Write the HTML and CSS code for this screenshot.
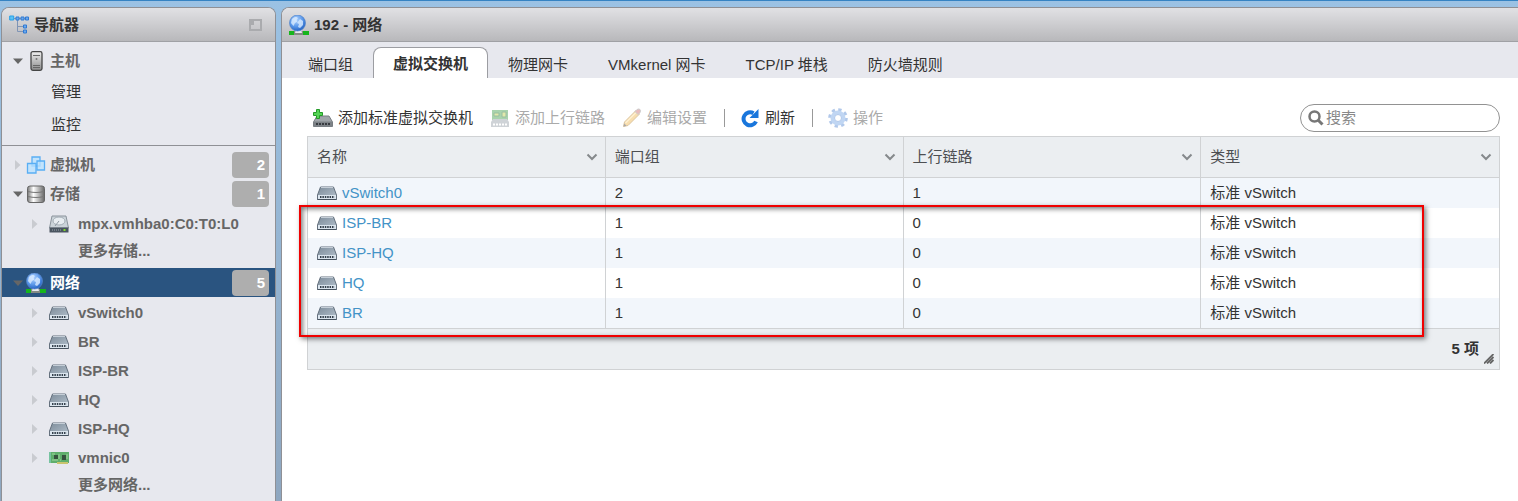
FILE: index.html
```html
<!DOCTYPE html>
<html lang="zh-CN">
  <head>
    <meta charset="utf-8">
    <meta name="viewport" content="width=device-width,initial-scale=1">
    <title>192 - 网络</title>
    <link rel="stylesheet" href="styles.css">
  </head>
  <body>
    <!-- Shared icons -->
    <svg class="sprite" aria-hidden="true">
        <defs>
            <linearGradient id="steel" x1="0" y1="0" x2="1" y2="1">
                <stop offset="0" stop-color="#7e8d9b"/>
                <stop offset="1" stop-color="#b4c1cd"/>
            </linearGradient>
            <linearGradient id="metal" x1="0" y1="0" x2="1" y2="0">
                <stop offset="0" stop-color="#777"/>
                <stop offset="0.35" stop-color="#fff"/>
                <stop offset="1" stop-color="#666"/>
            </linearGradient>
            <linearGradient id="tower" x1="0" y1="0" x2="0" y2="1">
                <stop offset="0" stop-color="#f0f0f0"/>
                <stop offset="1" stop-color="#8b8b8b"/>
            </linearGradient>
            <radialGradient id="ball" cx="0.4" cy="0.3" r="0.7">
                <stop offset="0" stop-color="#b5d7ff"/>
                <stop offset="0.6" stop-color="#5b98ea"/>
                <stop offset="1" stop-color="#2765c4"/>
            </radialGradient>
        </defs>
        <symbol id="icon-open" viewBox="0 0 12 12"><path d="M1 3.500h10L6 9z" fill="#666"/></symbol>
        <symbol id="icon-closed" viewBox="0 0 12 12"><path d="M3 1v10L8.500 6z" fill="#c9cbd0"/></symbol>
        <symbol id="icon-switch" viewBox="0 0 20 20">
            <path d="M3.500 4h13l3 8v4.500H.5V12z" fill="url(#steel)" stroke="#65717e"/>
            <path d="M4 4.500h12" stroke="#c5ced7"/>
            <path d="M1 12h18v4H1z" fill="#dbe5ee"/>
            <path d="M3 14h14.500" stroke="#34404c" stroke-width="2" stroke-dasharray="1.500 .9"/>
            <path d="M.5 16.500h19" stroke="#46525e"/>
        </symbol>
        <symbol id="icon-globe" viewBox="0 0 20 20">
            <path d="M0 16h20v4H0z" fill="#16b51c"/>
            <path d="M5 16h9v4H5z" fill="#858b85"/>
            <path d="M7 14h5l1 4H6z" fill="#e7eaf0"/>
            <circle cx="8.500" cy="8" r="8" fill="url(#ball)" stroke="#5786c9" stroke-width=".7"/>
            <path d="M3 4c3-3 5-2 6-1L7.500 5l1 1.500L6 8 4.500 11 2 8zM11 4l3 2v4l-3 3-2-1 1-3-2-1z" fill="#d9ebff" opacity=".8"/>
        </symbol>
        <symbol id="icon-nav" viewBox="0 0 20 20">
            <path d="M5 3.500h13M8.500 4v12.500H15M8.500 11.500H15" fill="none" stroke="#8095b5"/>
            <path d="M.7 1h4v4h-4z" fill="#5cc2f5" stroke="#27a0e8"/>
            <path d="M7 2h3v3H7zM12 2h3v3h-3zM16.500 2h3v3h-3zM14.500 10h3v3h-3zM14.500 15h3v3h-3z" fill="#6ca9ee" stroke="#317ad2"/>
        </symbol>
        <symbol id="icon-host" viewBox="0 0 20 20">
            <rect x="5" y=".7" width="11" height="18.600" rx="1.800" fill="url(#tower)" stroke="#454545" stroke-width="1.300"/>
            <path d="M7 4.500h7M7 14.500h7M7 16.500h7" stroke="#666"/>
            <circle cx="10.500" cy="8" r="1" fill="#777"/>
        </symbol>
        <symbol id="icon-vm" viewBox="0 0 20 20">
            <g fill="#b9e1ff" fill-opacity=".8" stroke="#59aef4" stroke-width="1.300">
                <path d="M6 2h8v9H6z"/>
                <path d="M11 6h7.500v9H11z"/>
                <path d="M1.500 8.500H10V18H1.500z"/>
            </g>
        </symbol>
        <symbol id="icon-store" viewBox="0 0 20 20">
            <rect x="1.500" y="2" width="17" height="16.500" rx="2.500" fill="url(#metal)" stroke="#666"/>
            <path d="M2 7.500q8 2 16 0M2 12.500q8 2 16 0" fill="none" stroke="#777" stroke-width="1.200"/>
        </symbol>
        <symbol id="icon-disk" viewBox="0 0 20 20">
            <path d="M3 2h14l2.500 12H.5z" fill="#cbd3d9" stroke="#8b949c"/>
            <ellipse cx="10" cy="7" rx="6" ry="4" fill="#e8edf1" stroke="#a2acb4"/>
            <path d="M10 7l-4 5" stroke="#8d98a2"/>
            <path d="M.5 13.500h19v5H.5z" fill="#4a5560"/>
            <path d="M3 16h9" stroke="#9ba5ad" stroke-dasharray="1 1"/>
            <path d="M14.500 15h2v2h-2z" fill="#7edb2a"/>
        </symbol>
        <symbol id="icon-nic" viewBox="0 0 20 20">
            <path d="M0 4h20v11H0z" fill="#5fae6c"/>
            <path d="M0 4h2v11H0z" fill="#76c3a0"/>
            <path d="M8 14h11v2H8z" fill="#c9c46e"/>
            <path d="M5 7h4v4H5zM13 7h4v5h-4z" fill="#36523e"/>
            <path d="M3 6h3M10 6v5M3 12h6M11 12h1M18 6v5" stroke="#a0d59b"/>
        </symbol>
        <symbol id="icon-add" viewBox="0 0 20 20">
            <path d="M4 8h12l3.500 6v4.500H.5V14z" fill="#a0a5aa" stroke="#777c81"/>
            <path d="M1 13.500h18v5H1z" fill="#7d8287"/>
            <path d="M3 16h15" stroke="#373b40" stroke-width="2" stroke-dasharray="2 1"/>
            <path d="M3.500 1.500h3v3h3v3h-3v3h-3v-3h-3v-3h3z" fill="#55d455" stroke="#249b29"/>
        </symbol>
        <symbol id="icon-uplink" viewBox="0 0 20 20">
            <path d="M2 2h16v10H2z" fill="#56a95e"/>
            <path d="M4 5h5v3H4zM12 4h4v5h-4z" fill="#c6d55b" stroke="#377f45"/>
            <path d="M3 11h14l2 3v5H1v-5z" fill="#a1a9b1"/>
            <path d="M3 16.500h15" stroke="#fff" stroke-width="2" stroke-dasharray="2 1"/>
        </symbol>
        <symbol id="icon-pencil" viewBox="0 0 20 20">
            <path d="M1.500 18.500l1-4.500L14 2.500 17.500 6 6 17.500z" fill="#f2bd5d" stroke="#b98b42"/>
            <path d="M3.500 15L15 3.500" stroke="#ffe4a5" stroke-width="1.500"/>
            <path d="M13 3.500l2-2q2-1 3 0t0 3l-2 2z" fill="#d57878" stroke="#999"/>
            <path d="M1.500 18.500l.8-3 2.200 2.200z" fill="#555"/>
        </symbol>
        <symbol id="icon-refresh" viewBox="0 0 20 20">
            <path d="M16 13.500A6.500 6.500 0 1 1 13.500 5.300" fill="none" stroke="#1976dc" stroke-width="4"/>
            <path d="M18.500 1v9H9.500z" fill="#1976dc"/>
        </symbol>
        <symbol id="icon-gear" viewBox="0 0 20 20">
            <circle cx="10" cy="10" r="8.300" fill="none" stroke="#6593d7" stroke-width="3" stroke-dasharray="3.260 3.260"/>
            <circle cx="10" cy="10" r="5.500" fill="none" stroke="#82aee8" stroke-width="4"/>
            <circle cx="10" cy="10" r="3.500" fill="none" stroke="#6593d7"/>
        </symbol>
        <symbol id="icon-search" viewBox="0 0 20 20">
            <circle cx="8.500" cy="8.500" r="5" fill="none" stroke="#777" stroke-width="2.500"/>
            <path d="M12 12l4.500 4.500" stroke="#777" stroke-width="3"/>
        </symbol>
        <symbol id="icon-down" viewBox="0 0 12 12"><path d="M1.500 3.500L6 8l4.500-4.500" fill="none" stroke="#85898c" stroke-width="2"/></symbol>
        <symbol id="icon-pin" viewBox="0 0 14 12">
            <path d="M1 1h11v10H1z" fill="none" stroke="#aaabae" stroke-width="2"/>
            <path d="M2 2h3v4H2z" fill="#aaabae"/>
        </symbol>
        <symbol id="icon-grip" viewBox="0 0 10 10"><path d="M0 9.500L9.500 0M3 9.500L9.500 3M6 9.500L9.500 6" stroke="#666" stroke-width="1.800"/></symbol>
    </svg>

    <div class="layout">
        <aside class="panel navigator">
            <header class="panel-header">
                <svg class="icon"><use href="#icon-nav"/></svg>
                <h2>导航器</h2>
                <button class="pin" aria-label="折叠"><svg><use href="#icon-pin"/></svg></button>
            </header>
            <nav>
                <ul class="tree host">
                    <li>
                        <a class="node" href="#"><svg class="arrow"><use href="#icon-open"/></svg><svg class="icon"><use href="#icon-host"/></svg><span>主机</span></a>
                        <ul>
                            <li><a class="leaf" href="#">管理</a></li>
                            <li><a class="leaf" href="#">监控</a></li>
                        </ul>
                    </li>
                </ul>
                <ul class="tree inventory">
                    <li>
                        <a class="node" href="#"><svg class="arrow"><use href="#icon-closed"/></svg><svg class="icon"><use href="#icon-vm"/></svg><span>虚拟机</span><span class="badge">2</span></a>
                    </li>
                    <li>
                        <a class="node" href="#"><svg class="arrow"><use href="#icon-open"/></svg><svg class="icon"><use href="#icon-store"/></svg><span>存储</span><span class="badge">1</span></a>
                        <ul class="children">
                            <li><a class="node" href="#"><svg class="arrow"><use href="#icon-closed"/></svg><svg class="icon"><use href="#icon-disk"/></svg><span>mpx.vmhba0:C0:T0:L0</span></a></li>
                            <li><a class="more" href="#">更多存储...</a></li>
                        </ul>
                    </li>
                    <li>
                        <a class="node selected" href="#"><svg class="arrow"><use href="#icon-open"/></svg><svg class="icon"><use href="#icon-globe"/></svg><span>网络</span><span class="badge">5</span></a>
                        <ul class="children">
                            <li><a class="node" href="#"><svg class="arrow"><use href="#icon-closed"/></svg><svg class="icon"><use href="#icon-switch"/></svg><span>vSwitch0</span></a></li>
                            <li><a class="node" href="#"><svg class="arrow"><use href="#icon-closed"/></svg><svg class="icon"><use href="#icon-switch"/></svg><span>BR</span></a></li>
                            <li><a class="node" href="#"><svg class="arrow"><use href="#icon-closed"/></svg><svg class="icon"><use href="#icon-switch"/></svg><span>ISP-BR</span></a></li>
                            <li><a class="node" href="#"><svg class="arrow"><use href="#icon-closed"/></svg><svg class="icon"><use href="#icon-switch"/></svg><span>HQ</span></a></li>
                            <li><a class="node" href="#"><svg class="arrow"><use href="#icon-closed"/></svg><svg class="icon"><use href="#icon-switch"/></svg><span>ISP-HQ</span></a></li>
                            <li><a class="node" href="#"><svg class="arrow"><use href="#icon-closed"/></svg><svg class="icon"><use href="#icon-nic"/></svg><span>vmnic0</span></a></li>
                            <li><a class="more" href="#">更多网络...</a></li>
                        </ul>
                    </li>
                </ul>
            </nav>
        </aside>

        <main class="panel content">
            <header class="panel-header">
                <svg class="icon"><use href="#icon-globe"/></svg>
                <h1>192 - 网络</h1>
            </header>
            <div class="tabs" role="tablist">
                <button class="tab" role="tab">端口组</button>
                <button class="tab active" role="tab" aria-selected="true">虚拟交换机</button>
                <button class="tab" role="tab">物理网卡</button>
                <button class="tab" role="tab">VMkernel 网卡</button>
                <button class="tab" role="tab">TCP/IP 堆栈</button>
                <button class="tab" role="tab">防火墙规则</button>
            </div>
            <div class="view">
                <div class="toolbar">
                    <button class="action"><svg class="icon"><use href="#icon-add"/></svg>添加标准虚拟交换机</button>
                    <button class="action" disabled><svg class="icon"><use href="#icon-uplink"/></svg>添加上行链路</button>
                    <button class="action" disabled><svg class="icon"><use href="#icon-pencil"/></svg>编辑设置</button>
                    <span class="separator"></span>
                    <button class="action"><svg class="icon"><use href="#icon-refresh"/></svg>刷新</button>
                    <span class="separator"></span>
                    <button class="action" disabled><svg class="icon"><use href="#icon-gear"/></svg>操作</button>
                    <label class="search">
                        <svg class="icon"><use href="#icon-search"/></svg>
                        <input type="search" placeholder="搜索" aria-label="搜索">
                    </label>
                </div>
                <div class="grid">
                    <table>
                        <thead>
                            <tr>
                                <th><div class="head">名称<svg class="arrow"><use href="#icon-down"/></svg></div></th>
                                <th><div class="head">端口组<svg class="arrow"><use href="#icon-down"/></svg></div></th>
                                <th><div class="head">上行链路<svg class="arrow"><use href="#icon-down"/></svg></div></th>
                                <th><div class="head">类型<svg class="arrow"><use href="#icon-down"/></svg></div></th>
                            </tr>
                        </thead>
                        <tbody>
                            <tr><td><a class="name" href="#"><svg class="icon"><use href="#icon-switch"/></svg>vSwitch0</a></td><td>2</td><td>1</td><td>标准 vSwitch</td></tr>
                            <tr><td><a class="name" href="#"><svg class="icon"><use href="#icon-switch"/></svg>ISP-BR</a></td><td>1</td><td>0</td><td>标准 vSwitch</td></tr>
                            <tr><td><a class="name" href="#"><svg class="icon"><use href="#icon-switch"/></svg>ISP-HQ</a></td><td>1</td><td>0</td><td>标准 vSwitch</td></tr>
                            <tr><td><a class="name" href="#"><svg class="icon"><use href="#icon-switch"/></svg>HQ</a></td><td>1</td><td>0</td><td>标准 vSwitch</td></tr>
                            <tr><td><a class="name" href="#"><svg class="icon"><use href="#icon-switch"/></svg>BR</a></td><td>1</td><td>0</td><td>标准 vSwitch</td></tr>
                        </tbody>
                    </table>
                    <div class="grid-footer">
                        <span>5 项</span>
                        <svg class="grip"><use href="#icon-grip"/></svg>
                    </div>
                    <div class="highlight"></div>
                </div>
            </div>
        </main>
    </div>
  </body>
</html>
```
FILE: styles.css
```css
:root {
    --panel: #e7e8ee;
    --border: #8f9095;
    --line: #d0d2d4;
    --text: #333;
    --muted: #666;
    --link: #4393c7;
    --selected: #2a5480;
}

* {
    box-sizing: border-box;
}

body {
    margin: 0;
    min-height: 100vh;
    border-top: 1px solid #3583c3;
    background: linear-gradient(#9bc2e4, #8fa7c0);
    color: var(--text);
    font: 15px/20px "Liberation Sans", "Noto Sans CJK SC", sans-serif;
    overflow: hidden;
}

ul {
    margin: 0;
    padding: 0;
    list-style: none;
}

a {
    color: inherit;
    text-decoration: none;
}

button {
    padding: 0;
    border: 0;
    background: none;
    color: inherit;
    font: inherit;
}

.sprite {
    position: absolute;
    width: 0;
    height: 0;
}

.icon {
    flex: none;
    width: 20px;
    height: 20px;
}

.arrow {
    flex: none;
    width: 12px;
    height: 12px;
}

.layout {
    display: flex;
    gap: 5px;
    min-height: 100vh;
    padding: 6px 0 0 1px;
}

/* Panels */
.panel {
    border: 1px solid var(--border);
    border-bottom: 0;
    border-radius: 8px 8px 0 0;
    background: var(--panel);
}

.panel-header {
    display: flex;
    align-items: center;
    gap: 5px;
    height: 34px;
    padding: 0 12px 0 7px;
    border-bottom: 1px solid #a0a1a5;
    border-radius: 7px 7px 0 0;
    background: linear-gradient(#e1e1e4, #b8b8bb);
}

.panel-header h1,
.panel-header h2 {
    margin: 0;
    font-size: 15px;
    line-height: 20px;
}

.pin {
    display: flex;
    margin-left: auto;
}

.pin svg {
    width: 14px;
    height: 12px;
}

/* Navigator */
.navigator {
    flex: none;
    width: 275px;
}

.host {
    padding: 5px 0 4px;
    border-bottom: 1px solid var(--border);
}

.host .node {
    height: 28px;
}

.inventory {
    padding-top: 4px;
}

.node {
    display: flex;
    align-items: center;
    height: 29px;
    padding: 0 6px 0 10px;
    color: var(--muted);
    font-weight: bold;
}

.node .icon {
    margin: 0 4px 0 2px;
}

.children {
    padding: 1px 0 4px;
}

.children .node {
    padding-left: 27px;
}

.children .icon {
    margin: 0 9px 0 8px;
}

.leaf {
    display: block;
    padding-left: 49px;
    line-height: 33px;
}

.more {
    display: block;
    padding-left: 76px;
    color: var(--muted);
    font-weight: bold;
    line-height: 26px;
}

.selected {
    background: var(--selected);
    color: #fff;
}

.badge {
    width: 37px;
    margin-left: auto;
    padding-right: 4px;
    border-radius: 4px;
    background: #aeaeae;
    color: #fff;
    line-height: 26px;
    text-align: right;
}

/* Content */
.content {
    flex: 1;
    min-width: 0;
    border-right: 0;
    border-top-right-radius: 0;
    background: #fff;
}

.content .panel-header {
    border-top-right-radius: 0;
}

.tabs {
    display: flex;
    padding: 5px 0 0 6px;
    background: var(--panel);
}

.tab {
    height: 31px;
    padding: 4px 20px 0;
}

.tab.active {
    padding: 2px 19px 0;
    border: 1px solid #9c9da2;
    border-bottom: 0;
    border-radius: 8px 8px 0 0;
    background: #fff;
    font-weight: bold;
}

.view {
    padding: 26px 18px 0 25px;
}

.toolbar {
    display: flex;
    align-items: center;
    height: 28px;
    padding-left: 6px;
    margin-bottom: 4px;
}

.action {
    display: flex;
    align-items: center;
    gap: 5px;
    height: 24px;
    margin-right: 17px;
}

.action:disabled {
    color: #aaa;
}

.action:disabled .icon {
    opacity: 0.5;
}

.separator {
    width: 1px;
    height: 18px;
    margin-right: 15px;
    background: #999;
}

.search {
    display: flex;
    align-items: center;
    width: 200px;
    height: 28px;
    margin-left: auto;
    padding: 0 10px 0 5px;
    border: 1px solid #929292;
    border-radius: 14px;
}

.search input {
    width: 100%;
    min-width: 0;
    padding: 0;
    border: 0;
    outline: 0;
    background: none;
    font: inherit;
}

.search input::placeholder {
    color: #888;
}

/* Switch table */
.grid {
    position: relative;
    border: 1px solid var(--line);
}

table {
    width: 100%;
    table-layout: fixed;
    border-collapse: separate;
    border-spacing: 0;
}

th,
td {
    height: 30px;
    padding: 0 9px;
    border-right: 1px solid var(--line);
    text-align: left;
}

th:last-child,
td:last-child {
    border-right: 0;
}

th {
    height: 41px;
    padding-right: 7px;
    border-bottom: 1px solid var(--line);
    background: #ebeef1;
    color: #4d4f52;
    font-weight: normal;
}

.head {
    display: flex;
    align-items: center;
    justify-content: space-between;
}

tbody tr:nth-child(odd) {
    background: #f2f6fb;
}

.name {
    display: flex;
    align-items: center;
    gap: 5px;
    color: var(--link);
}

.grid-footer {
    display: flex;
    align-items: center;
    justify-content: flex-end;
    gap: 5px;
    height: 41px;
    padding-right: 5px;
    border-top: 1px solid var(--line);
    background: #ebeef1;
    font-weight: bold;
}

.grip {
    align-self: flex-end;
    width: 10px;
    height: 10px;
    margin-bottom: 5px;
}

/* Frame around the newly added switches */
.highlight {
    position: absolute;
    top: 68px;
    right: 75px;
    bottom: 32px;
    left: -9px;
    border: 2px solid #f00000;
    box-shadow: 2px 2px 5px rgba(0, 0, 0, 0.5), inset 2px 2px 5px rgba(0, 0, 0, 0.5);
    pointer-events: none;
}
```
